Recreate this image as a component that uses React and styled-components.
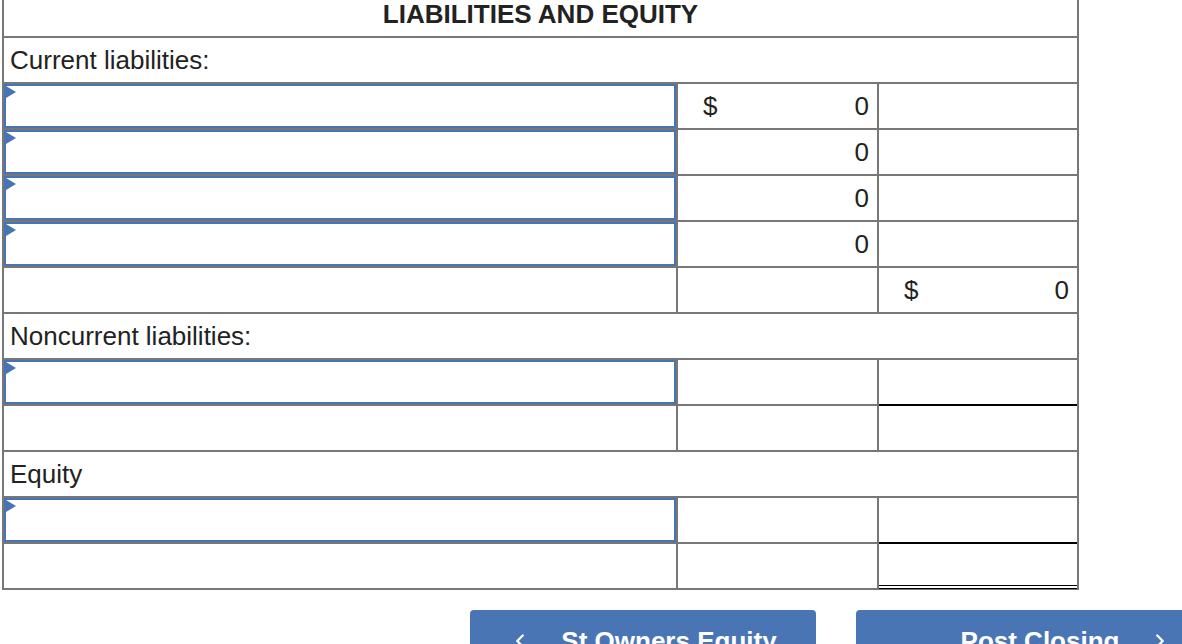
import styled, { createGlobalStyle } from "styled-components";
import { ChevronLeft, ChevronRight } from "lucide-react";

const GlobalStyle = createGlobalStyle`
  html, body {
    margin: 0;
    padding: 0;
    background: #fff;
    overflow: hidden;
    font-family: "Liberation Sans", Arial, sans-serif;
  }
`;

const Page = styled.div`
  padding-left: 2px;
  width: 1182px;
  height: 644px;
  overflow: hidden;
`;

const Sheet = styled.div`
  display: grid;
  grid-template-columns: 672px 199px 198px;
  gap: 2px;
  padding: 0 2px 2px 2px;
  background: #777;
  width: fit-content;
`;

const Cell = styled.div`
  background: #fff;
  height: ${(p) => (p.$short ? 36 : 44)}px;
  box-sizing: border-box;
  display: flex;
  align-items: center;
  color: #222;
  font-size: 26px;
  position: relative;
  ${(p) => p.$span && "grid-column: 1 / -1;"}
  ${(p) => p.$rule === "single" && "box-shadow: 0 2px 0 #000;"}
  ${(p) =>
    p.$rule === "double" &&
    "box-shadow: 0 1px 0 #000, inset 0 -2px 0 #fff, inset 0 -3px 0 #000;"}
`;

const Heading = styled(Cell)`
  justify-content: center;
  font-weight: bold;
  padding-bottom: 8px;
`;

const Label = styled(Cell)`
  padding-left: 6px;
`;

const Amount = styled(Cell)`
  justify-content: space-between;
  padding: 0 8px 0 25px;
`;

const EntryCell = styled(Cell)`
  &::before {
    content: "";
    position: absolute;
    left: 2px;
    top: 2px;
    border-top: 6px solid transparent;
    border-bottom: 6px solid transparent;
    border-left: 10px solid #4873b4;
  }
`;

const Entry = styled.input`
  width: 100%;
  height: 100%;
  box-sizing: border-box;
  border: 2px solid #4873b4;
  margin: 0;
  padding: 0 8px;
  font-size: 22px;
  font-family: inherit;
  outline: none;
  background: #fff;
`;

const Nav = styled.div`
  display: flex;
  gap: 40px;
  padding-left: 468px;
  margin-top: 20px;
`;

const NavButton = styled.button`
  flex: none;
  width: ${(p) => p.$width}px;
  height: 60px;
  display: flex;
  justify-content: center;
  align-items: flex-start;
  gap: 30px;
  padding: 16px 0 0;
  border: none;
  border-radius: 4px 4px 0 0;
  background: #4a75b4;
  color: #fff;
  font-family: "Liberation Sans", Arial, sans-serif;
  font-size: 26px;
  font-weight: bold;
  line-height: 30px;

  svg {
    margin-top: 4px;
  }
`;

const AmountCell = ({ sign, value, rule }) => (
  <Amount $rule={rule}>
    <span>{sign ? "$" : ""}</span>
    <span>{value}</span>
  </Amount>
);

const EntryRow = ({ sign, value, rule }) => (
  <>
    <EntryCell>
      <Entry />
    </EntryCell>
    <AmountCell sign={sign} value={value} />
    <Cell $rule={rule} />
  </>
);

const App = () => {
  return (
    <>
      <GlobalStyle />
      <Page>
        <Sheet>
          <Heading $span $short>
            LIABILITIES AND EQUITY
          </Heading>
          <Label $span>Current liabilities:</Label>
          <EntryRow sign value="0" />
          <EntryRow value="0" />
          <EntryRow value="0" />
          <EntryRow value="0" />
          <Cell />
          <Cell />
          <AmountCell sign value="0" />
          <Label $span>Noncurrent liabilities:</Label>
          <EntryRow rule="single" />
          <Cell />
          <Cell />
          <Cell />
          <Label $span>Equity</Label>
          <EntryRow rule="single" />
          <Cell />
          <Cell />
          <Cell $rule="double" />
        </Sheet>
        <Nav>
          <NavButton $width={346}>
            <ChevronLeft size={22} strokeWidth={2.5} />
            <span>St Owners Equity</span>
          </NavButton>
          <NavButton $width={420}>
            <span>Post Closing</span>
            <ChevronRight size={22} strokeWidth={2.5} />
          </NavButton>
        </Nav>
      </Page>
    </>
  );
};

export default App;
